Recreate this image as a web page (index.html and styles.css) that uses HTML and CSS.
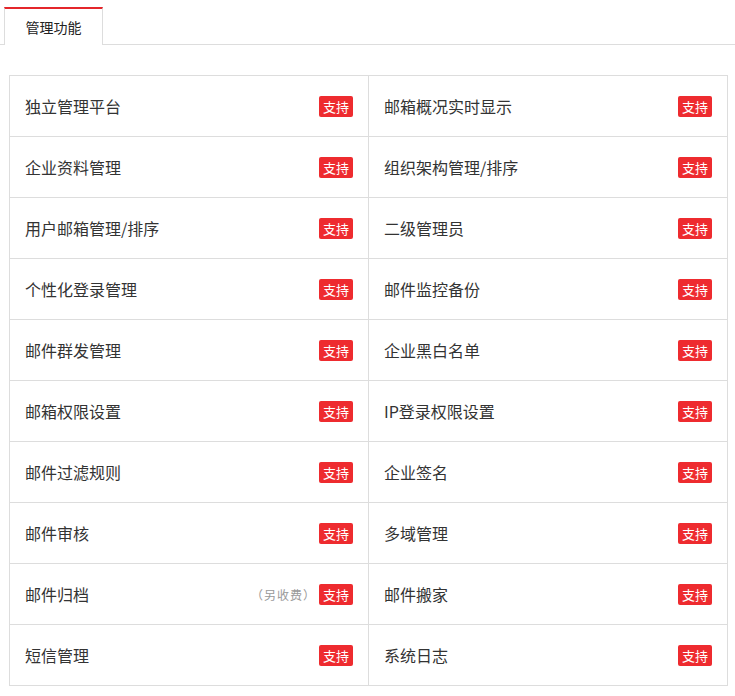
FILE: index.html
```html
<!DOCTYPE html>
<html lang="zh">
<head>
<meta charset="utf-8">
<link rel="stylesheet" href="styles.css">
</head>
<body>
<div class="tabs"><div class="tab">管理功能</div></div>
<div class="grid">
  <div class="cell"><span class="name">独立管理平台</span><span class="badge">支持</span></div>
  <div class="cell"><span class="name">邮箱概况实时显示</span><span class="badge">支持</span></div>
  <div class="cell"><span class="name">企业资料管理</span><span class="badge">支持</span></div>
  <div class="cell"><span class="name">组织架构管理/排序</span><span class="badge">支持</span></div>
  <div class="cell"><span class="name">用户邮箱管理/排序</span><span class="badge">支持</span></div>
  <div class="cell"><span class="name">二级管理员</span><span class="badge">支持</span></div>
  <div class="cell"><span class="name">个性化登录管理</span><span class="badge">支持</span></div>
  <div class="cell"><span class="name">邮件监控备份</span><span class="badge">支持</span></div>
  <div class="cell"><span class="name">邮件群发管理</span><span class="badge">支持</span></div>
  <div class="cell"><span class="name">企业黑白名单</span><span class="badge">支持</span></div>
  <div class="cell"><span class="name">邮箱权限设置</span><span class="badge">支持</span></div>
  <div class="cell"><span class="name">IP登录权限设置</span><span class="badge">支持</span></div>
  <div class="cell"><span class="name">邮件过滤规则</span><span class="badge">支持</span></div>
  <div class="cell"><span class="name">企业签名</span><span class="badge">支持</span></div>
  <div class="cell"><span class="name">邮件审核</span><span class="badge">支持</span></div>
  <div class="cell"><span class="name">多域管理</span><span class="badge">支持</span></div>
  <div class="cell"><span class="name">邮件归档</span><span class="note">（另收费）</span><span class="badge">支持</span></div>
  <div class="cell"><span class="name">邮件搬家</span><span class="badge">支持</span></div>
  <div class="cell"><span class="name">短信管理</span><span class="badge">支持</span></div>
  <div class="cell"><span class="name">系统日志</span><span class="badge">支持</span></div>
</div>
</body>
</html>
```
FILE: styles.css
```css
* { box-sizing: border-box; }
body {
  margin: 0;
  background: #fff;
  font-family: "Noto Sans CJK SC", "Liberation Sans", sans-serif;
  color: #333;
}
.tabs {
  margin-top: 7px;
  padding-left: 4px;
  height: 38px;
  border-bottom: 1px solid #ddd;
  display: flex;
}
.tab {
  width: 99px;
  height: 38px;
  border-top: 2px solid #e4262b;
  border-left: 1px solid #ddd;
  border-right: 1px solid #ddd;
  background: #fff;
  font-size: 14px;
  line-height: 36px;
  text-align: center;
  color: #222;
}
.grid {
  margin: 30px 0 0 9px;
  width: 719px;
  display: grid;
  grid-template-columns: 1fr 1fr;
  border-top: 1px solid #ddd;
  border-left: 1px solid #ddd;
}
.cell {
  height: 61px;
  border-right: 1px solid #ddd;
  border-bottom: 1px solid #ddd;
  display: flex;
  align-items: center;
  padding: 0 15px 0 15px;
}
.name {
  flex: 1;
  font-size: 16px;
  color: #333;
}
.note {
  font-size: 12px;
  color: #999;
  letter-spacing: 1px;
  margin-right: 3px;
}
.badge {
  width: 34px;
  height: 21px;
  background: #ee2b2f;
  color: #fff;
  border-radius: 2px;
  font-size: 13px;
  line-height: 21px;
  text-align: center;
}
```
